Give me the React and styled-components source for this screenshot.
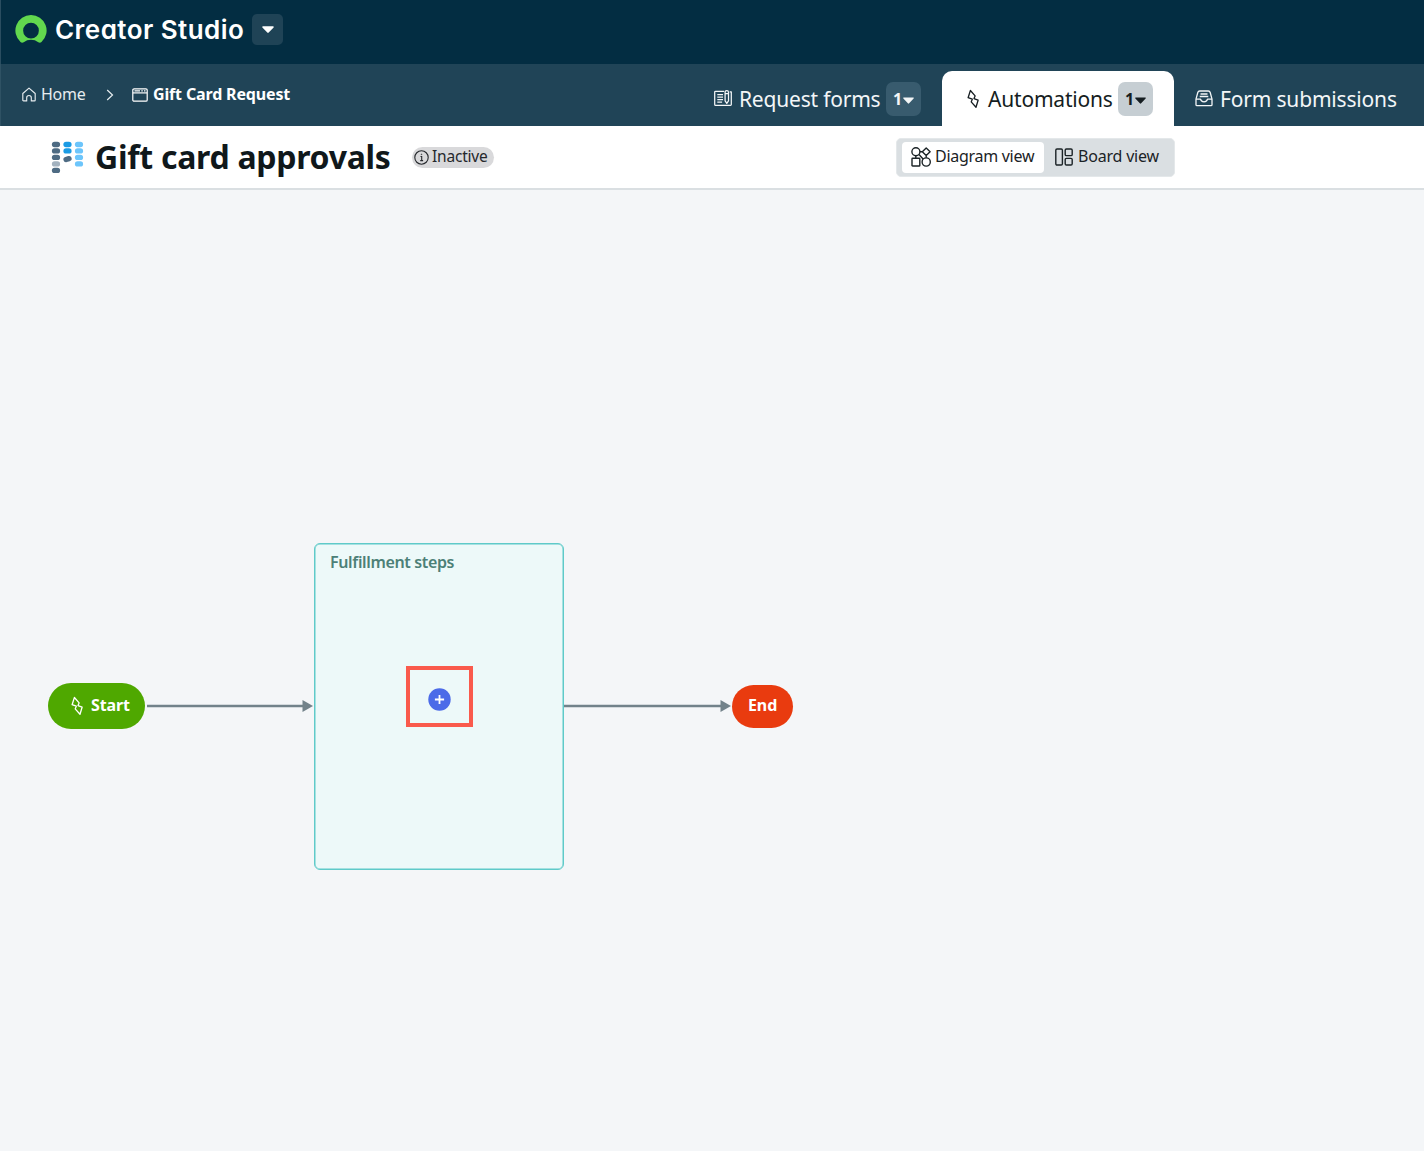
import React from "react";
import styled, { createGlobalStyle } from "styled-components";

const GlobalStyle = createGlobalStyle`
  *, *::before, *::after { box-sizing: border-box; }
  body { margin: 0; background: #f4f5f7; font-family: "Noto Sans", "Open Sans", sans-serif; }
  button { font: inherit; color: inherit; border: 0; padding: 0; margin: 0; background: none; }
  svg { display: block; flex: none; }
`;

const Page = styled.div`
  display: flex;
  flex-direction: column;
  width: 1424px;
  height: 1151px;
  overflow: hidden;
`;

const Label = styled.span`
  flex: none;
  width: ${(p) => p.$w}px;
  white-space: nowrap;
  font-size: ${(p) => p.$size}px;
  font-weight: ${(p) => p.$weight || 400};
  letter-spacing: ${(p) => p.$track || 0}px;
  line-height: 1.36;
  color: ${(p) => p.$color || "inherit"};
`;

const Header = styled.header`
  display: flex;
  flex: none;
  height: 64px;
  padding: 14px 0 0 14px;
  background: #032d42;
  color: #fff;
  border-left: 1px solid #2a4d60;
`;

const Brand = styled.h1`
  margin: -2px 0 0 8px;
  width: 197px;
  height: 34px;
  font-family: Inter, "Noto Sans", sans-serif;
  font-feature-settings: "cv11", "ss03";
  font-size: 26px;
  font-weight: 600;
  line-height: 36px;
  letter-spacing: 0.45px;
  white-space: nowrap;
`;

const BrandMenu = styled.button`
  display: grid;
  place-items: center;
  width: 31px;
  height: 31px;
  border-radius: 5px;
  background: #1f4356;
`;

const SubNav = styled.nav`
  display: flex;
  flex: none;
  justify-content: space-between;
  height: 62px;
  padding-left: 21px;
  background: #204457;
  color: #fff;
  border-left: 1px solid #2f5264;
`;

const Crumbs = styled.div`
  display: flex;
  align-items: center;
  height: 61px;
`;

const Crumb = styled.div`
  display: flex;
  align-items: center;
  gap: 5px;
`;

const Separator = styled.div`
  margin: 0 18px 0 21px;
`;

const Tabs = styled.div`
  display: flex;
  align-items: flex-end;
`;

const Tab = styled.div`
  display: flex;
  align-items: center;
  height: 55px;
  width: ${(p) => p.$w}px;
  padding-left: ${(p) => p.$pad}px;
  gap: ${(p) => p.$gap}px;
  border-radius: 10px 10px 0 0;
  background: ${(p) => (p.$active ? "#fff" : "transparent")};
  color: ${(p) => (p.$active ? "#151d21" : "#f3f6f7")};

  & > ${Label} {
    padding-top: 2px;
  }
`;

const Count = styled.button`
  display: flex;
  align-items: center;
  justify-content: center;
  gap: 1px;
  width: 35px;
  height: 34px;
  margin-left: ${(p) => p.$shift || 0}px;
  border-radius: 7px;
  background: ${(p) => (p.$active ? "#c6ced3" : "#385b6e")};
  font-size: 16px;
  font-weight: 700;

  svg {
    margin-top: 3px;
  }
`;

const TitleBar = styled.section`
  display: flex;
  flex: none;
  align-items: center;
  height: 64px;
  padding-left: 51px;
  background: #fff;
  border-bottom: 2px solid #dadfe2;
`;

const Title = styled.h2`
  margin: 0 0 1px 11px;
  width: 317px;
  font-size: 32px;
  font-weight: 700;
  line-height: 44px;
  letter-spacing: -0.28px;
  white-space: nowrap;
  color: #10181b;
`;

const Status = styled.span`
  display: flex;
  align-items: center;
  gap: 3px;
  width: 82px;
  height: 21px;
  padding-left: 2px;
  border-radius: 11px;
  background: #d9d9db;
  color: #25282c;
`;

const ViewSwitch = styled.div`
  display: flex;
  width: 279px;
  height: 39px;
  margin-left: 402px;
  padding: 3px 5px;
  border-radius: 5px;
  background: #dadfe2;
  border: 1px solid #e4e8ea;
`;

const ViewOption = styled.button`
  display: flex;
  align-items: center;
  gap: 4px;
  width: ${(p) => p.$w}px;
  height: 31px;
  padding-left: ${(p) => p.$pad}px;
  border-radius: 4px;
  background: ${(p) => (p.$active ? "#fff" : "transparent")};
  color: #1b2326;
`;

const Canvas = styled.main`
  position: relative;
  flex: 1;
  background: #f4f6f8;
`;

const Node = styled.div`
  position: absolute;
  left: ${(p) => p.$x}px;
  top: ${(p) => p.$y}px;
`;

const Pill = styled(Node)`
  display: flex;
  align-items: center;
  width: ${(p) => p.$w}px;
  height: ${(p) => p.$h}px;
  padding-left: ${(p) => p.$pad}px;
  padding-bottom: 1px;
  gap: 7px;
  border-radius: ${(p) => p.$h / 2}px;
  background: ${(p) => p.$fill};
  color: #fff;
`;

const Stage = styled(Node)`
  width: 250px;
  height: 327px;
  padding: 7px 15px;
  border: 1px solid #5fcac9;
  box-shadow: inset 0 0 0 0.5px #5fcac9;
  border-radius: 6px;
  background: #edf9f9;
`;

const Highlight = styled(Node)`
  width: 67px;
  height: 61px;
  border: 4px solid #fa5a4c;
  display: flex;
  justify-content: center;
  padding-top: 18px;
`;

const Caret = ({ w = 12, h = 7 }) => (
  <svg width={w} height={h} viewBox="0 0 12 7">
    <path d="M1 .3h10c.7 0 1 .7.6 1.1L6.7 6.6a1 1 0 0 1-1.4 0L.4 1.4C0 1 .3.3 1 .3Z" fill="currentColor" />
  </svg>
);

const Logo = () => (
  <svg width="32" height="30" viewBox="0 0 32 30">
    <path
      fill="#62d84e"
      fillRule="evenodd"
      d="M16 1A15.5 15.5 0 0 0 5.5 28c.9.8 2.200.9 3.200.2a12.500 12.500 0 0 1 14.600 0c1 .7 2.300.6 3.200-.2A15.500 15.500 0 0 0 16 1Zm0 23.500a7.800 7.800 0 1 1 0-15.700 7.800 7.800 0 0 1 0 15.700Z"
    />
  </svg>
);

const HomeIcon = () => (
  <svg width="14" height="15" viewBox="0 0 14 15" fill="none" stroke="#e6ecef" strokeWidth="1.15" strokeLinejoin="round">
    <path d="M.8 6.500 7 1.100l6.200 5.400v6.700c0 .4-.3.700-.7.700H9.300v-3.100a2.300 2.300 0 0 0-4.600 0v3.100H1.500a.7.700 0 0 1-.7-.7V6.500Z" />
  </svg>
);

const ChevronIcon = () => (
  <svg width="8" height="12" viewBox="0 0 8 12" fill="none" stroke="#e6ecef" strokeWidth="1.200">
    <path d="m1.200 1 5.300 5-5.300 5" />
  </svg>
);

const AppIcon = () => (
  <svg width="16" height="14" viewBox="0 0 16 14" fill="none" stroke="#fff" strokeWidth="1.200">
    <rect x=".8" y=".8" width="14.400" height="12.400" rx="1.300" />
    <path d="M.8 4.900h14.400" />
    <path d="M2.500 2.900h5.500M9.300 2.900h1.500M12 2.900h1.500" />
  </svg>
);

const FormIcon = () => (
  <svg width="18" height="17" viewBox="0 0 18 17" fill="none" stroke="currentColor" strokeWidth="1.250" strokeLinejoin="round">
    <path d="M10.300 1.300H1.600c-.6 0-.9.300-.9.900v12.200c0 .600.300.900.900.900h14.900c.500 0 .800-.300.800-.800V1.900h-1.600" />
    <path d="M3.300 4.500H9M3.300 7H9M3.300 9.500H9M3.300 12h4.800" />
    <path d="M11.100 2.200c0-.9.600-1.500 1.700-1.500s1.700.6 1.700 1.500v8.600l-1.700 2.600-1.700-2.600V2.200ZM11.100 3.500h3.400" />
  </svg>
);

const BoltIcon = () => (
  <svg width="14" height="20" viewBox="0 0 14 20" fill="none" stroke="currentColor" strokeWidth="1.300" strokeLinejoin="round">
    <path d="M4.400 1.500 2.100 8.700l4.200 1.500-1.100 2.700 4.800 5.300 2.100-7-4.100-1.600 1.100-2.700L4.400 1.500Z" />
  </svg>
);

const InboxIcon = () => (
  <svg width="18" height="17" viewBox="0 0 18 17" fill="none" stroke="currentColor" strokeWidth="1.300" strokeLinejoin="round">
    <path d="M1 9.200 2.800 2.500C3.100 1.500 3.700 1 4.700 1h8.600c1 0 1.600.500 1.900 1.500L17 9.200v5.500c0 .700-.300 1-1 1H2c-.700 0-1-.300-1-1V9.200Z" />
    <path d="M1 9.200h4.500c.3 1.600 1.500 2.600 3.500 2.600s3.200-1 3.500-2.600H17M5.500 4h7M4.700 6.500h8.600" />
  </svg>
);

const InfoIcon = () => (
  <svg width="15" height="15" viewBox="0 0 15 15" fill="none" stroke="currentColor" strokeWidth="1.100">
    <circle cx="7.500" cy="7.500" r="6.700" />
    <path d="M6.500 6.500h1.200v4M6.200 10.600h2.900" />
    <circle cx="7.500" cy="4.300" r=".4" fill="currentColor" strokeWidth=".6" />
  </svg>
);

const ProcessIcon = () => {
  const dots = [
    [5, 3.5, "#4e6b83"], [5, 9.9, "#4e6b83"], [5, 16.4, "#4e6b83"], [5, 22.9, "#a3b2bf"], [5, 29.4, "#4e6b83"],
    [16.5, 3.5, "#1a9be4"], [16.5, 9.9, "#1a9be4"],
    [28, 3.5, "#6cc5fb"], [28, 9.9, "#6cc5fb"], [28, 16.4, "#6cc5fb"], [28, 22.9, "#6cc5fb"],
  ];
  return (
    <svg width="33" height="33" viewBox="0 0 33 33">
      {dots.map(([x, y, c]) => (
        <rect key={`${x}-${y}`} x={x - 4.1} y={y - 2.7} width="8.2" height="5.4" rx="2.7" fill={c} />
      ))}
      <rect x="12.300" y="15.400" width="8.400" height="5.400" rx="2.700" fill="#4e6b83" transform="rotate(-17 16.500 18)" />
    </svg>
  );
};

const DiagramIcon = () => (
  <svg width="20" height="20" viewBox="0 0 20 20" fill="none" stroke="currentColor" strokeWidth="1.400" strokeLinejoin="round">
    <circle cx="4.900" cy="4.700" r="4" />
    <path d="m15.200 1 3.900 3.800-3.900 3.800-3.900-3.800L15.200 1ZM8.900 4.800h2.400M4.800 8.700v2.600M15.200 8.600v2.200M8 7.500l4.300 4.700" />
    <rect x="1" y="11.300" width="7.800" height="7.700" rx=".6" />
    <circle cx="15.200" cy="15" r="4.100" />
  </svg>
);

const BoardIcon = () => (
  <svg width="18" height="18" viewBox="0 0 18 18" fill="none" stroke="currentColor" strokeWidth="1.400">
    <rect x=".8" y="1" width="6.600" height="16" rx="1.200" />
    <rect x="10.200" y="1" width="7" height="6.600" rx="1.200" />
    <rect x="10.200" y="10.400" width="7" height="6.600" rx="1.200" />
  </svg>
);

const PlusIcon = () => (
  <svg width="23" height="23" viewBox="0 0 23 23">
    <circle cx="11.500" cy="11.500" r="11.200" fill="#4c6be8" />
    <path d="M11.500 6.900v9.200M6.900 11.500h9.200" stroke="#fff" strokeWidth="1.800" />
  </svg>
);

const Arrow = ({ w }) => (
  <svg width={w} height="14" viewBox={`0 0 ${w} 14`}>
    <path d={`M0 7H${w - 10}`} stroke="#72828a" strokeWidth="2.500" />
    <path d={`M${w - 10.5} 1v12L${w} 7Z`} fill="#72828a" />
  </svg>
);

export default function App() {
  return (
    <Page>
      <GlobalStyle />
      <Header>
        <Logo />
        <Brand>Creator Studio</Brand>
        <BrandMenu aria-label="Switch studio"><Caret /></BrandMenu>
      </Header>

      <SubNav>
        <Crumbs>
          <Crumb>
            <HomeIcon />
            <Label $size={16} $w={44} $track={-0.25} $color="#e6ecef">Home</Label>
          </Crumb>
          <Separator><ChevronIcon /></Separator>
          <Crumb>
            <AppIcon />
            <Label $size={16} $w={137} $track={-0.15} $weight={700}>Gift Card Request</Label>
          </Crumb>
        </Crumbs>
        <Tabs>
          <Tab $w={229} $pad={1} $gap={7}>
            <FormIcon />
            <Label $size={21} $w={141} $track={-0.2}>Request forms</Label>
            <Count $shift={-1}>1<Caret w={11} /></Count>
          </Tab>
          <Tab $active $w={232} $pad={24} $gap={8}>
            <BoltIcon />
            <Label $size={21} $w={125} $track={-0.2}>Automations</Label>
            <Count $active $shift={-3}>1<Caret w={11} /></Count>
          </Tab>
          <Tab $w={250} $pad={21} $gap={7}>
            <InboxIcon />
            <Label $size={21} $w={178} $track={-0.18}>Form submissions</Label>
          </Tab>
        </Tabs>
      </SubNav>

      <TitleBar>
        <ProcessIcon />
        <Title>Gift card approvals</Title>
        <Status>
          <InfoIcon />
          <Label $size={15.5} $w={57} $track={-0.2}>Inactive</Label>
        </Status>
        <ViewSwitch>
          <ViewOption $active $w={143} $pad={9}>
            <DiagramIcon />
            <Label $size={16} $w={99} $track={-0.28}>Diagram view</Label>
          </ViewOption>
          <ViewOption $w={125} $pad={11}>
            <BoardIcon />
            <Label $size={16} $w={82} $track={-0.18}>Board view</Label>
          </ViewOption>
        </ViewSwitch>
      </TitleBar>

      <Canvas>
        <Pill $x={48} $y={493} $w={97} $h={46} $pad={22} $fill="#4fa800">
          <BoltIcon />
          <Label $size={16} $w={40} $weight={700} $track={-0.1}>Start</Label>
        </Pill>
        <Node $x={147} $y={509}><Arrow w={166} /></Node>
        <Stage $x={314} $y={353}>
          <Label $size={16} $w={126} $weight={600} $track={-0.35} $color="#4c8077">Fulfillment steps</Label>
        </Stage>
        <Highlight $x={406} $y={476}><PlusIcon /></Highlight>
        <Node $x={564} $y={509}><Arrow w={167} /></Node>
        <Pill $x={732} $y={495} $w={61} $h={43} $pad={16} $fill="#e93b0f">
          <Label $size={16} $w={30} $weight={700} $track={-0.1}>End</Label>
        </Pill>
      </Canvas>
    </Page>
  );
}
